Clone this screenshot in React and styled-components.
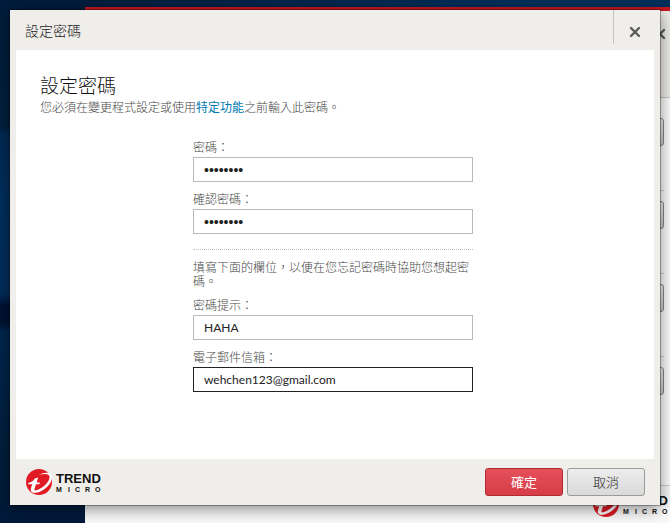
import React from 'react';
import styled, { createGlobalStyle } from 'styled-components';

const GlobalStyle = createGlobalStyle`
  *, *::before, *::after {
    box-sizing: border-box;
  }

  body {
    margin: 0;
    font-family: "Noto Sans CJK TC", "Liberation Sans", sans-serif;
    font-size: 12px;
    font-weight: 300;
    color: #484848;
  }
`;

// Both windows share the single grid cell, the dialog is painted last
const Desktop = styled.div`
  display: grid;
  grid-template: minmax(0, 1fr) / minmax(0, 1fr);
  min-height: 100vh;
  overflow: hidden;
  background:
    linear-gradient(90deg, rgba(0, 48, 92, 0) 10%, #00305c 80%) top / 100% 10px no-repeat,
    linear-gradient(
      #001c3c 0,
      #00213f 128px,
      #002a54 134px,
      #00305f 200px,
      #002e5c 294px,
      #001233 306px,
      #001233 322px,
      #002750 332px,
      #00203f 440px,
      #00193a 100%
    );
`;

const BackWindow = styled.section`
  grid-area: 1 / 1;
  display: flex;
  flex-direction: column;
  margin: 7px 0 0 85px;
  background: #fff;
  border-top: 4px solid #c91622;
`;

const BackHeader = styled.header`
  display: flex;
  align-items: center;
  justify-content: flex-end;
  height: 87px;
  padding: 0 4px 40px 0;
  background: #efeeea;
  border-bottom: 1px solid #c8c8c8;
`;

const BackList = styled.div`
  flex: 1;
  padding: 10px 6px 0 0;
`;

const BackRow = styled.div`
  display: flex;
  justify-content: flex-end;
  height: 83px;
  padding-top: 10px;

  &:not(:last-child) {
    border-bottom: 1px solid #ccc;
  }
`;

const BackRowHandle = styled.span`
  width: 76px;
  height: 28px;
  background: linear-gradient(#f4f4f4, #cfcfcf);
  border: 1px solid #8a8a8a;
  border-radius: 3px;
`;

const BackFooter = styled.footer`
  display: flex;
  justify-content: flex-end;
  height: 38px;
  padding-top: 4px;
  background: #fafafa;
  border-top: 1px solid #d0d0d0;
`;

const Dialog = styled.form`
  grid-area: 1 / 1;
  align-self: start;
  z-index: 1;
  display: flex;
  flex-direction: column;
  margin: 10px;
  background: #efeeea;
  box-shadow: 0 0 0 1px rgba(0, 0, 0, 0.3), 0 3px 16px rgba(0, 0, 0, 0.5);
`;

const DialogHeader = styled.header`
  display: flex;
  justify-content: space-between;
  height: 40px;
  padding-left: 15px;
`;

const DialogTitle = styled.h1`
  margin: 0;
  font-size: 14px;
  font-weight: 300;
  line-height: 40px;
  color: #222;
`;

const CloseButton = styled.button`
  display: flex;
  align-items: center;
  justify-content: center;
  width: 47px;
  height: 34px;
  padding: 10px 4px 0 0;
  background: none;
  border: 0;
  border-left: 1px solid #c6c5c2;
  cursor: pointer;
`;

const DialogBody = styled.div`
  min-height: 409px;
  margin: 0 6px;
  padding: 23px 28px 24px 24px;
  background: #fff;
`;

const Heading = styled.h2`
  margin: 0;
  font-size: 19px;
  font-weight: 300;
  line-height: 24px;
  color: #111;
`;

const Intro = styled.p`
  margin: 0;
  line-height: 20px;
`;

const HelpLink = styled.a`
  font-weight: 400;
  color: #0079b0;
  text-decoration: none;
`;

const Fields = styled.div`
  display: flex;
  flex-direction: column;
  gap: 7px;
  width: 280px;
  margin: 20px auto 0;
`;

const Field = styled.div`
  display: flex;
  flex-direction: column;
`;

const Label = styled.label`
  line-height: 20px;
`;

const TextInput = styled.input`
  width: 100%;
  height: 25px;
  padding: 0 10px;
  font-family: ${({ type }) => (type === 'password' ? '"Liberation Sans"' : 'Lato')}, sans-serif;
  font-size: ${({ type }) => (type === 'password' ? 14 : 12)}px;
  color: #222;
  background: #fff;
  border: 1px solid ${({ $active }) => ($active ? '#222' : '#b9b9b9')};
  border-radius: 0;
  outline: none;
`;

const Hint = styled.p`
  margin: 8px 0 0;
  padding-top: 10px;
  line-height: 14px;
  border-top: 1px dotted #bbb;
`;

const DialogFooter = styled.footer`
  display: flex;
  align-items: center;
  justify-content: space-between;
  height: 46px;
  padding: 0 15px;
`;

const Actions = styled.div`
  display: flex;
  gap: 4px;
`;

const Button = styled.button`
  width: 78px;
  height: 28px;
  padding: 0 0 2px;
  font-family: inherit;
  font-size: 13px;
  font-weight: ${({ $primary }) => ($primary ? 400 : 300)};
  color: ${({ $primary }) => ($primary ? '#fff' : '#222')};
  background: ${({ $primary }) =>
    $primary ? 'linear-gradient(#e4505a, #d83c46)' : 'linear-gradient(#ededed, #d9d9d9)'};
  border: 1px solid ${({ $primary }) => ($primary ? '#b02a34' : '#9b9b9b')};
  border-radius: 3px;
  cursor: pointer;
`;

const CloseIcon = () => (
  <svg width="12" height="12" viewBox="0 0 12 12" aria-hidden="true">
    <path d="M2 2l8 8M10 2l-8 8" fill="none" stroke="#5a5a58" strokeWidth="2.4" strokeLinecap="round" />
  </svg>
);

const Logo = () => (
  <svg width="78" height="28" viewBox="0 0 78 28" role="img" aria-label="Trend Micro">
    <circle cx="14" cy="14" r="13" fill="#e01b24" />
    <path
      d="M9.8 10.600l3.400-1.200-1.600 5H15l-.7 1.900H11l-1.500 4.600c-.3 1.400.6 1.700 2 1.300C18 20.500 24.600 13.500 24.600 9c0-3.300-4.600-3.700-10.600-2.200C20 3.800 27 3.600 27 9.200c0 7-8.600 14.600-16.200 15.600-3.900.5-5.700-1.300-4.900-4.300l1.300-4.200H3l.7-1.600c2.600-.2 4.600-1.600 6.100-4.100z"
      fill="#fff"
    />
    <g fill="#111" fontFamily="Liberation Sans, sans-serif" fontWeight="700">
      <text x="31" y="15" fontSize="13">TREND</text>
      <text x="31 43 50 60 70" y="24" fontSize="7">MICRO</text>
    </g>
  </svg>
);

const fields = [
  { id: 'password', label: '密碼：', type: 'password', value: 'password' },
  { id: 'confirm', label: '確認密碼：', type: 'password', value: 'password' },
];

const recoveryFields = [
  { id: 'hint', label: '密碼提示：', type: 'text', value: 'HAHA' },
  { id: 'email', label: '電子郵件信箱：', type: 'email', value: 'wehchen123@gmail.com', active: true },
];

const renderField = ({ id, label, type, value, active }) => (
  <Field key={id}>
    <Label htmlFor={id}>{label}</Label>
    <TextInput id={id} type={type} defaultValue={value} $active={active} autoComplete="off" />
  </Field>
);

const App = () => {
  return (
    <>
      <GlobalStyle />
      <Desktop>
        <BackWindow aria-hidden="true">
          <BackHeader>
            <CloseIcon />
          </BackHeader>
          <BackList>
            {[0, 1, 2, 3].map((row) => (
              <BackRow key={row}>
                <BackRowHandle />
              </BackRow>
            ))}
          </BackList>
          <BackFooter>
            <Logo />
          </BackFooter>
        </BackWindow>

        <Dialog onSubmit={(e) => e.preventDefault()}>
          <DialogHeader>
            <DialogTitle>設定密碼</DialogTitle>
            <CloseButton type="button" aria-label="關閉">
              <CloseIcon />
            </CloseButton>
          </DialogHeader>
          <DialogBody>
            <Heading>設定密碼</Heading>
            <Intro>
              您必須在變更程式設定或使用<HelpLink href="#features">特定功能</HelpLink>之前輸入此密碼。
            </Intro>
            <Fields>
              {fields.map(renderField)}
              <Hint>填寫下面的欄位，以便在您忘記密碼時協助您想起密碼。</Hint>
              {recoveryFields.map(renderField)}
            </Fields>
          </DialogBody>
          <DialogFooter>
            <Logo />
            <Actions>
              <Button type="submit" $primary>確定</Button>
              <Button type="button">取消</Button>
            </Actions>
          </DialogFooter>
        </Dialog>
      </Desktop>
    </>
  );
};

export default App;
